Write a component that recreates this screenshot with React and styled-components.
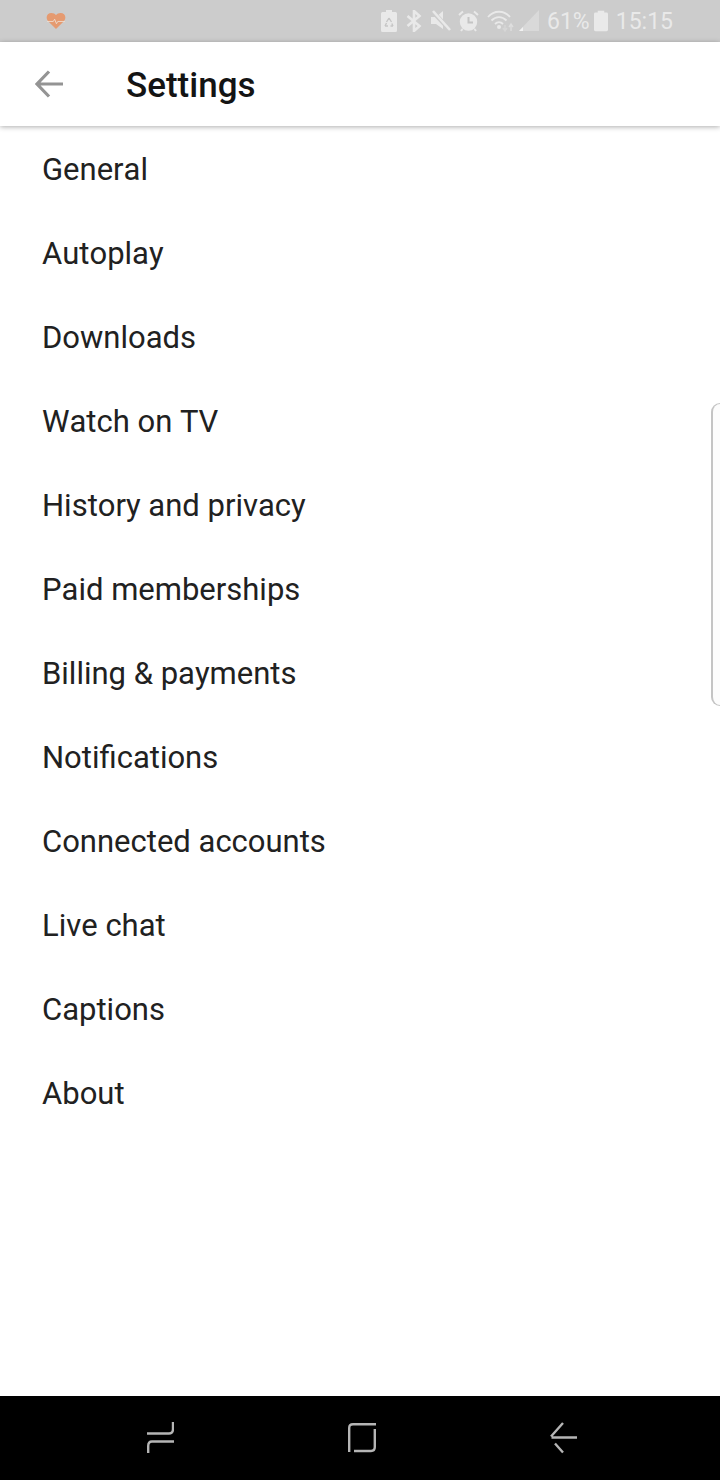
import React from "react";
import styled, { createGlobalStyle } from "styled-components";

const Global = createGlobalStyle`
  html, body { margin: 0; padding: 0; background: #fff; }
  body { font-family: Roboto, "Liberation Sans", sans-serif; }
`;

const Screen = styled.div`
  position: relative;
  width: 720px;
  height: 1480px;
  display: flex;
  flex-direction: column;
  background: #fff;
  overflow: hidden;
`;

const StatusBar = styled.div`
  height: 42px;
  flex: none;
  background: #cccccc;
  display: flex;
  align-items: center;
  justify-content: space-between;
  padding: 0 47px 0 46px;
  box-sizing: border-box;
`;

const StatusRight = styled.div`
  display: flex;
  align-items: center;
  color: #e9e9e9;
`;

const StatusIcon = styled.svg`
  display: block;
  flex: none;
  margin-right: ${p => p.$right || 0}px;
`;

const StatusText = styled.span`
  font-size: 23px;
  line-height: 42px;
  padding-top: 2px;
  margin-right: ${p => p.$right || 0}px;
`;

const AppBar = styled.header`
  position: relative;
  z-index: 1;
  height: 84px;
  flex: none;
  display: flex;
  align-items: center;
  padding-left: 35px;
  background: #fff;
  box-shadow: 0 1px 5px rgba(0, 0, 0, 0.32);
`;

const Title = styled.h1`
  margin: 0 0 0 63px;
  padding-top: 2px;
  font-size: 35px;
  font-weight: 500;
  color: #141414;
`;

const List = styled.ul`
  flex: 1;
  margin: 0;
  padding: 0;
  list-style: none;
`;

const Item = styled.li`
  height: 84px;
  box-sizing: border-box;
  padding: 2px 0 0 42px;
  display: flex;
  align-items: center;
  font-size: 31px;
  font-kerning: none;
  color: #212121;
`;

const NavBar = styled.nav`
  height: 84px;
  flex: none;
  background: #000;
  display: flex;
  align-items: center;
  justify-content: space-between;
  padding: 0 143px 0 147px;
`;

const EdgeHandle = styled.div`
  position: absolute;
  top: 403px;
  right: 0;
  width: 9px;
  height: 303px;
  box-sizing: border-box;
  border: 1px solid #c4c4c4;
  border-left-width: 2px;
  border-right: 0;
  border-radius: 9px 0 0 9px;
  background: #fcfcfc;
`;

const Heart = () => (
  <StatusIcon width="20" height="18" viewBox="0 0 22 20">
    <path d="M11 19 L2 10 C-1 6 1 1 6 1 C8 1 10 2 11 3.5 C12 2 14 1 16 1 C21 1 23 6 20 10 Z" fill="#e59a70" />
    <path d="M1 10.5 H8 L9.5 8 L11.5 13 L13 10.5 H21" fill="none" stroke="#eedccf" strokeWidth="1" />
  </StatusIcon>
);

const ChargeIcon = () => (
  <StatusIcon $right={9} width="16" height="22" viewBox="0 0 16 22">
    <path d="M5 0 H11 V2 H14.5 Q16 2 16 3.5 V20.5 Q16 22 14.5 22 H1.5 Q0 22 0 20.5 V3.5 Q0 2 1.5 2 H5 Z" fill="#e9e9e9" />
    <path d="M8 8 L5.5 12 M8 8 L10.5 12 M4 16 H7 M9.5 16 H12 M4 16 L5.5 13 M12 16 L10.8 13.5" stroke="#c6c6c6" strokeWidth="1.4" fill="none" />
  </StatusIcon>
);

const BluetoothIcon = () => (
  <StatusIcon $right={9} width="16" height="22" viewBox="0 0 16 22">
    <path d="M1.5 6 L13.5 16 L8 21 V1 L13.5 6 L1.5 16" fill="none" stroke="#e9e9e9" strokeWidth="2.6" />
  </StatusIcon>
);

const MuteIcon = () => (
  <StatusIcon $right={7} width="20" height="22" viewBox="0 0 20 22">
    <path d="M0 7 H5 L12 1 V19 L5 14 H0 Z" fill="#e9e9e9" />
    <path d="M2 2 L19 20" stroke="#cccccc" strokeWidth="4.5" />
    <path d="M2 1 L19 20" stroke="#e9e9e9" strokeWidth="2.6" />
  </StatusIcon>
);

const AlarmIcon = () => (
  <StatusIcon $right={8} width="21" height="22" viewBox="0 0 21 22">
    <circle cx="10.5" cy="12" r="8.7" fill="#e9e9e9" />
    <path d="M10.5 7 V12.5 H15" fill="none" stroke="#c4c4c4" strokeWidth="2" />
    <path d="M1 5 L5 1.5 M20 5 L16 1.5 M4.5 19 L3 21 M16.5 19 L18 21" stroke="#e9e9e9" strokeWidth="2" />
  </StatusIcon>
);

const WifiIcon = () => (
  <StatusIcon $right={2} width="30" height="22" viewBox="0 0 30 22">
    <path d="M1 7 C7 0 17 0 23 7 M4.5 10.5 C9 6 15 6 19.5 10.5 M8 14 C10.5 11.5 13.5 11.5 16 14" fill="none" stroke="#e9e9e9" strokeWidth="1.8" />
    <circle cx="12" cy="17" r="2" fill="#e9e9e9" />
    <path d="M18 15 V20 M16 18 L18 21 L20 18" fill="none" stroke="#d6d6d6" strokeWidth="1.4" />
    <path d="M24 21 V15 M22 17 L24 14 L26 17" fill="none" stroke="#dedede" strokeWidth="1.4" />
  </StatusIcon>
);

const SignalIcon = () => (
  <StatusIcon $right={8} width="20" height="22" viewBox="0 0 20 22">
    <path d="M20 0 V21 H0 Z" fill="#d9d9d9" />
    <path d="M0 21 L4 17 V21 Z" fill="#f2f2f2" />
  </StatusIcon>
);

const BatteryIcon = () => (
  <StatusIcon $right={8} width="14" height="22" viewBox="0 0 15 22">
    <path d="M4 0 H11 V2 H13.5 Q15 2 15 3.5 V20.5 Q15 22 13.5 22 H1.5 Q0 22 0 20.5 V3.5 Q0 2 1.5 2 H4 Z" fill="#e9e9e9" />
  </StatusIcon>
);

const BackArrow = () => (
  <svg width="28" height="28" viewBox="0 0 28 28">
    <path d="M28 14 H2.5 M14 1.5 L2 14 L14 26.5" fill="none" stroke="#949494" strokeWidth="3.2" />
  </svg>
);

const RecentIcon = () => (
  <svg width="27" height="32" viewBox="0 0 27 32">
    <path d="M0 11.5 H22 Q26 11.5 26 7 V0" fill="none" stroke="#b5b5b5" strokeWidth="2.4" />
    <path d="M27 19.5 H5 Q1.2 19.5 1.2 24 V31" fill="none" stroke="#b5b5b5" strokeWidth="2.4" />
  </svg>
);

const HomeIcon = () => (
  <svg width="28" height="30" viewBox="0 0 28 30">
    <path d="M28 1.2 H5 Q1.2 1.2 1.2 5 V29" fill="none" stroke="#b5b5b5" strokeWidth="2.4" />
    <path d="M26.8 6 V24 Q26.8 28 23 28 H6" fill="none" stroke="#b5b5b5" strokeWidth="2.4" />
  </svg>
);

const NavBack = () => (
  <svg width="27" height="32" viewBox="0 0 27 32">
    <path d="M27 15.5 H1.5 M13 1 L1 14.5 M5 21.5 L13 30.5" fill="none" stroke="#b5b5b5" strokeWidth="2.4" />
  </svg>
);

const items = [
  "General",
  "Autoplay",
  "Downloads",
  "Watch on TV",
  "History and privacy",
  "Paid memberships",
  "Billing & payments",
  "Notifications",
  "Connected accounts",
  "Live chat",
  "Captions",
  "About",
];

export default function App() {
  return (
    <Screen>
      <Global />
      <StatusBar>
        <Heart />
        <StatusRight>
          <ChargeIcon />
          <BluetoothIcon />
          <MuteIcon />
          <AlarmIcon />
          <WifiIcon />
          <SignalIcon />
          <StatusText $right={4}>61%</StatusText>
          <BatteryIcon />
          <StatusText>15:15</StatusText>
        </StatusRight>
      </StatusBar>
      <AppBar>
        <BackArrow />
        <Title>Settings</Title>
      </AppBar>
      <List>
        {items.map(name => (
          <Item key={name}>{name}</Item>
        ))}
      </List>
      <NavBar>
        <RecentIcon />
        <HomeIcon />
        <NavBack />
      </NavBar>
      <EdgeHandle />
    </Screen>
  );
}
